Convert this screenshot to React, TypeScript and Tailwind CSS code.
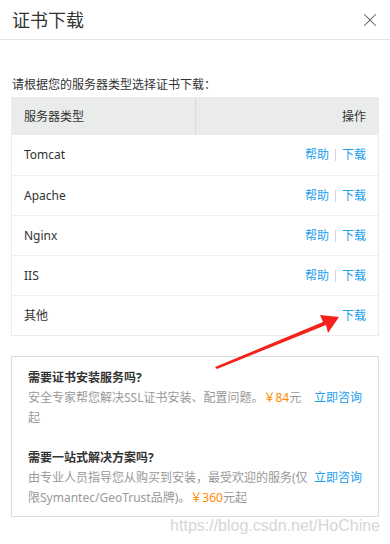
import { X } from "lucide-react"

const servers = [
  { name: "Tomcat", help: true },
  { name: "Apache", help: true },
  { name: "Nginx", help: true },
  { name: "IIS", help: true },
  { name: "其他", help: false },
]

const font = "font-['Noto_Sans','Noto_Sans_CJK_SC',sans-serif]"

export default function App() {
  return (
    <div className={`relative h-[544px] w-[390px] overflow-hidden bg-white text-[#333] ${font}`}>
      {/* header */}
      <div className="flex h-[40px] items-center justify-between border-b border-[#e3e3e3] pl-3 pr-[9px]">
        <h1 className="text-[18px] leading-[24px] font-normal text-[#333]">证书下载</h1>
        <X className="h-[22px] w-[22px] text-[#555]" strokeWidth={1.1} />
      </div>

      <div className="px-[11px]">
        <p className="mt-[35px] pl-[1px] text-[12px] leading-[20px] text-[#333]">请根据您的服务器类型选择证书下载：</p>

        {/* table */}
        <div className="mt-[2px] border border-[#ececec]">
          <div className="flex h-[37px] bg-[#eaeceb] text-[12px]">
            <div className="flex flex-1 items-center border-r border-[#d9dbda] pl-3">服务器类型</div>
            <div className="flex flex-1 items-center justify-end pr-3">操作</div>
          </div>
          {servers.map((s, i) => (
            <div
              key={s.name}
              className={`flex h-[40px] items-center justify-between pl-3 pr-3 text-[12px] ${
                i > 0 ? "border-t border-[#efefef]" : ""
              }`}
            >
              <span className="text-[#333]">{s.name}</span>
              <span className="flex items-center text-[#1aa0ee]">
                {s.help && (
                  <>
                    <span>帮助</span>
                    <span className="mx-[6px] h-[12px] w-px bg-[#d5d5d5]" />
                  </>
                )}
                <span>下载</span>
              </span>
            </div>
          ))}
        </div>

        {/* services box */}
        <div className="mt-[20px] border border-[#dcdcdc] px-4 pt-[11px] pb-[8px] text-[12px] leading-[20px]">
          <div className="flex items-start justify-between">
            <div>
              <div className="font-bold text-[#333]">需要证书安装服务吗?</div>
              <div className="text-[#999]">
                安全专家帮您解决SSL证书安装、配置问题。<span className="text-[#ff8a00]">￥84</span>元
                <br />起
              </div>
            </div>
            <span className="mt-[20px] shrink-0 text-[#1aa0ee]">立即咨询</span>
          </div>
          <div className="mt-[20px] flex items-start justify-between">
            <div>
              <div className="font-bold text-[#333]">需要一站式解决方案吗?</div>
              <div className="whitespace-nowrap text-[#999]">
                由专业人员指导您从购买到安装，最受欢迎的服务(仅
                <br />限Symantec/GeoTrust品牌)。<span className="text-[#ff8a00]">￥360</span>元起
              </div>
            </div>
            <span className="mt-[20px] shrink-0 text-[#1aa0ee]">立即咨询</span>
          </div>
        </div>
      </div>

      {/* annotation arrow */}
      <svg className="absolute left-0 top-0" width="390" height="544" viewBox="0 0 390 544">
        <polygon points="217,369 326,325 328,333 339,317 320,315 323,322 215,367" fill="#f5221b" />
      </svg>

      {/* watermark */}
      <div className="absolute right-[10px] bottom-[10px] font-['Liberation_Sans',sans-serif] text-[16px] leading-[16px] text-[#d6d6d6]">
        https://blog.csdn.net/HoChine
      </div>
    </div>
  )
}
